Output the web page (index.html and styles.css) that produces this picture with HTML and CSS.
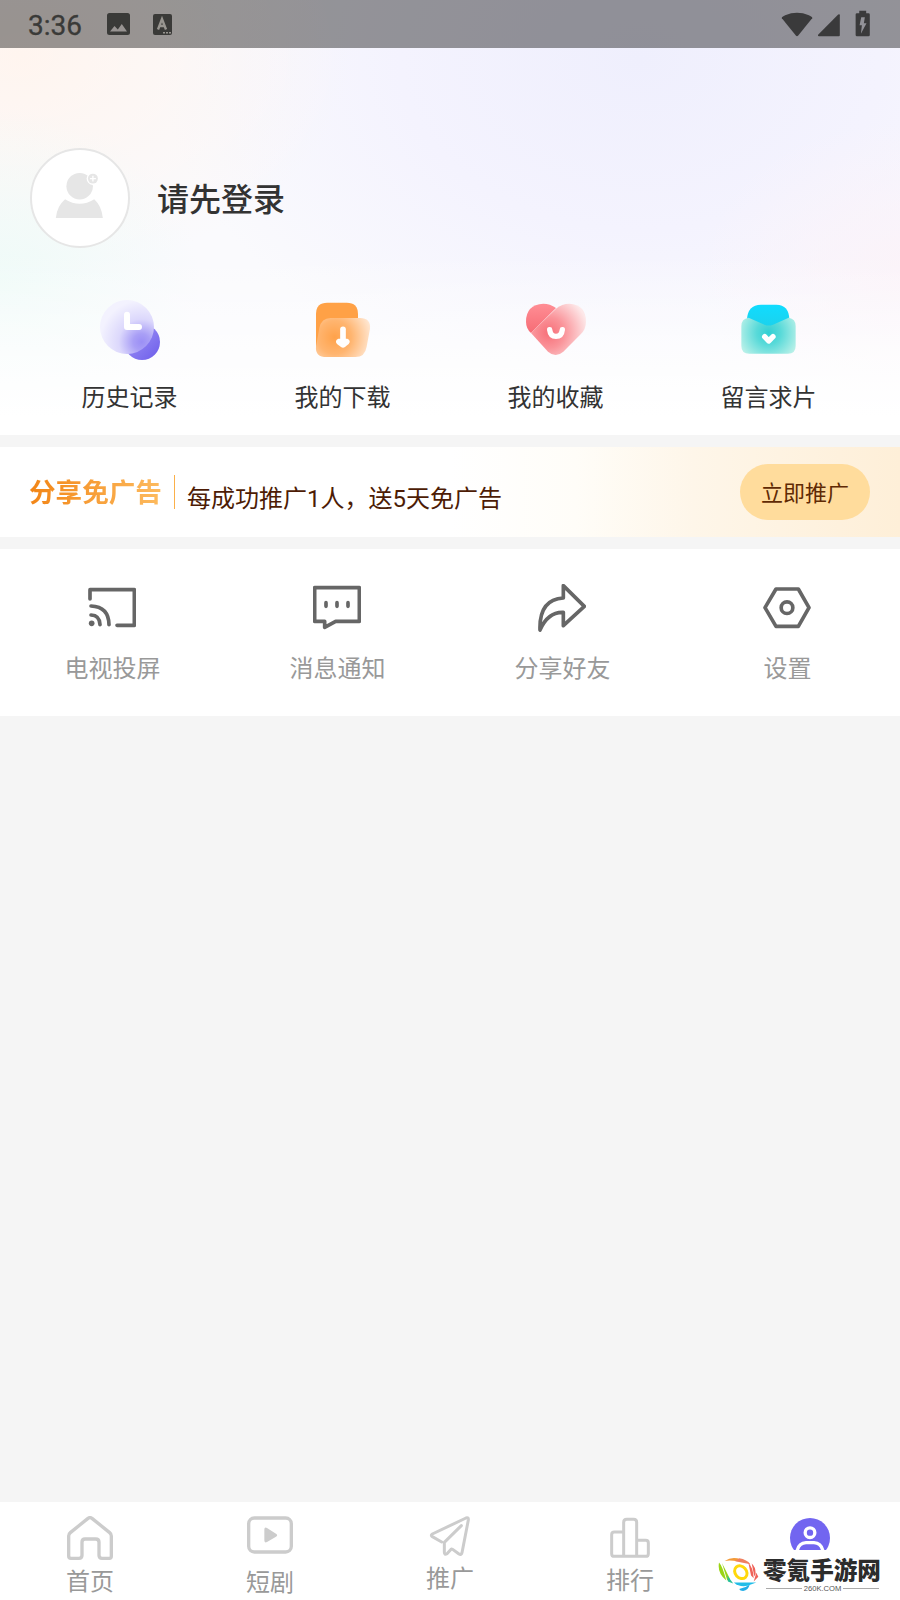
FILE: index.html
```html
<!DOCTYPE html>
<html lang="zh-CN">
<head>
<meta charset="utf-8">
<title>我的</title>
<link rel="stylesheet" href="styles.css">
</head>
<body>
<div class="screen">
  <header class="profile">
    <div class="statusbar">
      <span class="time">3:36</span>
      <svg class="st-image" viewBox="0 0 23 22"><path fill="#3a3a38" fill-rule="evenodd" d="M2.500 0h18Q23 0 23 2.500v17q0 2.500-2.500 2.500h-18Q0 22 0 19.500v-17Q0 0 2.500 0zM3 18.500h17L14.800 11l-4 5.500L7.500 13z"/></svg>
      <svg class="st-lang" viewBox="0 0 19 21"><rect width="19" height="21" rx="2" fill="#3a3a38"/><path d="M5 15.500 9 5l4 10.500M6.300 12h5.400" fill="none" stroke="#989590" stroke-width="2.400"/><path d="M10 18.700h8" stroke="#989590" stroke-width="1.600" stroke-dasharray="2 1"/></svg>
      <span class="spacer"></span>
      <svg class="st-system" viewBox="243 28 270 82" fill="#3a3a3b"><path d="M244 50q4-3 10-6 36-15 72 0 6 3 10 6v3l-43 53q-3 3-6 0l-43-53z"/><path d="M420 44v61q0 3-3 3h-60q-5 0-3-5l61-61q5-3 5 2z"/><path fill-rule="evenodd" d="M479 30h21v8h7q4 0 4 4v62q0 4-4 4h-35q-4 0-4-4V42q0-4 4-4h7zM485 50l-5 24h7l-3 26 17-32h-8l3-18z"/></svg>
    </div>
    <div class="user">
      <div class="avatar">
        <svg viewBox="165 515 150 142" width="50" height="47"><circle cx="239" cy="558" r="40" fill="#e6e6e6"/><circle cx="279" cy="535" r="19" fill="#fff"/><circle cx="279" cy="535" r="15" fill="#e6e6e6"/><path d="M279 526v18M270 535h18" stroke="#fff" stroke-width="4"/><path d="M167 654q3-36 28-57 44 28 88 0 23 21 26 57z" fill="#e6e6e6"/></svg>
      </div>
      <span class="login">请先登录</span>
    </div>
    <nav class="quick">
      <a class="quick-item">
        <svg viewBox="120 60 180 180" width="60" height="60">
          <defs>
            <linearGradient id="purple" x1="0" y1="0" x2="1" y2="1"><stop offset="0" stop-color="#a99ff8"/><stop offset="1" stop-color="#6c5cea"/></linearGradient>
            <radialGradient id="mist" gradientUnits="userSpaceOnUse" cx="245" cy="186" r="125"><stop offset="0" stop-color="#9b8ff5"/><stop offset=".2" stop-color="#a99ff6"/><stop offset=".55" stop-color="#dcd8fc"/><stop offset="1" stop-color="#f3f2fe"/></radialGradient>
          </defs>
          <circle cx="246" cy="186" r="54" fill="url(#purple)"/><circle cx="201" cy="141" r="81" fill="url(#mist)"/>
          <path d="M201 104v37h36" fill="none" stroke="#fff" stroke-width="18" stroke-linecap="round" stroke-linejoin="round"/>
        </svg>
        <span>历史记录</span>
      </a>
      <a class="quick-item">
        <svg viewBox="759 60 180 180" width="60" height="60">
          <defs><radialGradient id="amber" gradientUnits="userSpaceOnUse" cx="824" cy="172" r="112"><stop offset="0" stop-color="#ffa24a"/><stop offset=".45" stop-color="#ffb570"/><stop offset="1" stop-color="#ffe7d2"/></radialGradient></defs>
          <path d="M802 68h58q34 0 34 34v60l-80 69q-46 0-46-40v-89q0-34 34-34z" fill="#ffa146"/>
          <path d="M812 114h88q33 0 30 32l-10 54q-5 31-34 31h-86q-35 0-32-31l10-56q6-30 34-30z" fill="url(#amber)"/>
          <path d="M849 148v38" stroke="#fff" stroke-width="17" stroke-linecap="round"/><path d="M835 176h27q12 6 4 16l-11 9q-6 4-12 0l-12-9q-8-10 4-16z" fill="#fff"/>
        </svg>
        <span>我的下载</span>
      </a>
      <a class="quick-item">
        <svg viewBox="108 60 180 180" width="60" height="60">
          <defs>
            <linearGradient id="rose" x1="0" y1="0" x2="0" y2="1"><stop offset="0" stop-color="#ff8e95"/><stop offset="1" stop-color="#f66c75"/></linearGradient>
            <radialGradient id="blush" gradientUnits="userSpaceOnUse" cx="176" cy="158" r="118"><stop offset="0" stop-color="#f76f78"/><stop offset=".4" stop-color="#fa949a"/><stop offset="1" stop-color="#fde8e9"/></radialGradient>
          </defs>
          <path d="M198 84Q180 71 160 71q-52 3-52 54 0 20 15 34z" fill="url(#rose)"/>
          <path d="M123 159 198 86q18-15 40-15 50 3 50 54 0 22-16 38l-52 52q-23 20-46 0z" fill="url(#blush)"/>
          <path d="M179 149q2 20 19 20t19-20" fill="none" stroke="#fff" stroke-width="16" stroke-linecap="round"/>
        </svg>
        <span>我的收藏</span>
      </a>
      <a class="quick-item">
        <svg viewBox="747 60 180 180" width="60" height="60">
          <defs>
            <linearGradient id="cyan" x1="0" y1="0" x2="0" y2="1"><stop offset="0" stop-color="#10dcff"/><stop offset="1" stop-color="#1dd0ea"/></linearGradient>
            <radialGradient id="mint" gradientUnits="userSpaceOnUse" cx="836" cy="158" r="92"><stop offset="0" stop-color="#31d0d4"/><stop offset=".4" stop-color="#59dad9"/><stop offset="1" stop-color="#b7f0e8"/></radialGradient>
          </defs>
          <path d="M771 118q2-43 42-44h46q38 1 39 44l-62 30z" fill="url(#cyan)"/>
          <path d="M776 113l47 21q13 5 26 0l47-21q21 3 21 25v60q0 23-23 23H778q-24 0-24-23v-60q0-22 22-25z" fill="url(#mint)"/>
          <path d="M824 170l12 13 13-13" fill="none" stroke="#fff" stroke-width="16" stroke-linecap="round" stroke-linejoin="round"/>
        </svg>
        <span>留言求片</span>
      </a>
    </nav>
  </header>

  <section class="promo">
    <strong class="promo-title">分享免广告</strong>
    <i class="promo-line"></i>
    <span class="promo-text">每成功推广1人，送5天免广告</span>
    <a class="promo-btn">立即推广</a>
  </section>

  <section class="tools">
    <a class="tool">
      <svg viewBox="114 72 144 144"><path d="M120 117V89h133v107h-52M123 138q53 2 54 56M123 165q26 1 27 29"/><circle cx="125" cy="190" r="8.500" fill="#666" stroke="none"/></svg>
      <span>电视投屏</span>
    </a>
    <a class="tool">
      <svg viewBox="792 72 144 144"><path d="M797 83h134v101h-71l-33 18v-18h-30z"/><path d="M831 128v11M864 128v11M897 128v11"/></svg>
      <span>消息通知</span>
    </a>
    <a class="tool">
      <svg viewBox="144 72 144 144"><path d="M220 77l63 62-63 58v-40q-46-2-70 53-3-92 70-96z"/></svg>
      <span>分享好友</span>
    </a>
    <a class="tool">
      <svg viewBox="819 72 144 144"><path d="M858 87h67l32 56-32 56h-67l-33-56z"/><circle cx="891" cy="143" r="17.500"/></svg>
      <span>设置</span>
    </a>
  </section>

  <nav class="tabs">
    <a class="tab tab-home">
      <svg viewBox="78 78 144 138"><path d="M91 128 144 85q6-4 12 0l53 43q5 4 5 10v61q0 6-6 6h-22q-9 0-9-9v-39q0-10-10-10h-32q-9 0-9 10v39q0 9-9 9H93q-7 0-7-7v-60q0-6 5-10z"/></svg>
      <span>首页</span>
    </a>
    <a class="tab tab-video">
      <svg viewBox="618 78 144 138"><rect x="626" y="84" width="128" height="102" rx="17"/><path d="M673 119q0-9 8-5l27 17q7 4 0 9l-27 16q-8 4-8-5z" fill="#ccc" stroke="none"/></svg>
      <span>短剧</span>
    </a>
    <a class="tab tab-share">
      <svg viewBox="1158 78 144 138"><path d="M1205 156l-28-16q-6-4 0-8l101-48q8-3 7 6l-19 98q-2 8-9 4l-19-14-4-1-13 14q-8 5-8-4v-30l51-50" stroke-width="9"/></svg>
      <span>推广</span>
    </a>
    <a class="tab tab-rank">
      <svg viewBox="138 78 144 138"><path d="M191 126h-28q-8 0-8 8v57q0 8 8 8h94q8 0 8-8v-32q0-8-8-8h-27M191 199V97q0-9 9-9h21q9 0 9 9v102" stroke-width="9"/></svg>
      <span>排行</span>
    </a>
    <a class="tab tab-mine">
      <svg viewBox="678 78 144 102"><circle cx="750" cy="144" r="60" fill="#7265f0" stroke="none"/><circle cx="750" cy="128" r="14.500" stroke="#fff" stroke-width="10"/><path d="M711 184q5-25 27-26h24q22 1 27 26" stroke="#fff" stroke-width="10"/></svg>
    </a>
  </nav>

  <div class="mark">
    <svg viewBox="476 202 124 106" width="41" height="35">
      <path d="M479 219q10 10 22 54-28-22-22-54zM488 220l24 48-8 5z" fill="#9bd414"/>
      <path d="M496 214q23-15 48-5l-9 6q-23-5-39-1z" fill="#f39a38"/><path d="M540 206q24 4 34 18l-46-9z" fill="#f08060"/>
      <path d="M568 220q14 12 16 46l-8-8zM578 222q12 10 12 31l-4 8zM592 250l6 12-14 14z" fill="#ef6258"/>
      <path d="M504 258l18 24-16-6z" fill="#26bf9a"/><path d="M524 279h68l-27 10q-24 5-41-10z" fill="#22bde8"/><path d="M540 299q18-3 32-14-4 17-20 20-10 0-12-6z" fill="#22aee8"/>
      <ellipse cx="545" cy="248" rx="17" ry="21" transform="rotate(-42 545 248)" fill="none" stroke="#ffd80c" stroke-width="9"/>
    </svg>
    <div class="mark-text"><b>零氪手游网</b><small>260K.COM</small></div>
  </div>
</div>
</body>
</html>
```
FILE: styles.css
```css
* { box-sizing: border-box; }
body {
  margin: 0;
  background: #f5f5f5;
  font-family: Roboto, "Noto Sans CJK SC", sans-serif;
  font-size: 24px;
  color: #333;
}
svg { display: block; flex: none; }
.screen {
  position: relative;
  display: flex;
  flex-direction: column;
  width: 900px;
  height: 1600px;
}
.profile {
  height: 435px;
  background:
    linear-gradient(to bottom, rgba(255,255,255,0) 58%, #fff 96%),
    radial-gradient(ellipse 200px 170px at 0 280px, #effbf8, rgba(244,252,250,0)),
    radial-gradient(ellipse 330px 220px at 20px 55px, #fff5ef, rgba(254,249,246,0)),
    radial-gradient(ellipse 200px 150px at 900px 270px, #fbf3f9, rgba(251,245,250,0)),
    radial-gradient(ellipse 480px 340px at 640px 60px, #efeffd, #f4f3fe 50%, rgba(249,249,253,0)),
    #fafafd;
}
.statusbar {
  display: flex;
  align-items: center;
  height: 48px;
  padding: 0 29px 0 28px;
  background: rgba(0,0,0,.4);
}
.time { width: 79px; padding-top: 3px; font-size: 28px; font-weight: 400; line-height: 45px; -webkit-text-stroke: .3px #3a3a38; color: #3a3a38; }
.st-image { width: 23px; height: 22px; }
.st-lang { width: 19px; height: 21px; margin-left: 23px; }
.spacer { flex: 1; }
.st-system { width: 90px; height: 27px; margin-top: -2px; }
.user { display: flex; align-items: center; gap: 27px; height: 100px; margin: 100px 0 0 30px; }
.avatar {
  display: flex;
  justify-content: center;
  width: 100px;
  height: 100px;
  padding-top: 22px;
  border: 2px solid #e6e6e6;
  border-radius: 50%;
  background: #fff;
}
.login { padding-top: 3px; font-size: 32px; font-weight: 500; line-height: 48px; }
.quick { display: flex; padding: 52px 25px 0 23px; }
.quick-item { flex: 1; display: flex; flex-direction: column; align-items: center; gap: 20px; line-height: 36px; }
.promo {
  display: flex;
  align-items: center;
  height: 90px;
  margin-top: 12px;
  padding: 0 30px 0 29px;
  background: linear-gradient(to right, #fff 50%, #fffdf8 64%, #fef6e9 77%, #feefd8);
}
.promo-title {
  width: 133px;
  padding-top: 2px;
  font-size: 26.600px;
  font-weight: 700;
  line-height: 38px;
  white-space: nowrap;
  background: linear-gradient(to right, #f28516, #fdbb5f);
  -webkit-background-clip: text;
  background-clip: text;
  color: transparent;
}
.promo-line { width: 1px; height: 34px; margin: 0 12px; background: #fbb04a; }
.promo-text { padding-top: 14px; line-height: 36px; color: #4d1c05; }
.promo-btn {
  width: 130px;
  height: 56px;
  margin-left: auto;
  border-radius: 28px;
  background: #ffdc9c;
  font-size: 22px;
  line-height: 59px;
  text-align: center;
  color: #602a04;
}
.tools { display: flex; height: 167px; margin-top: 12px; padding-top: 35px; background: #fff; }
.tool { flex: 1; display: flex; flex-direction: column; align-items: center; gap: 19px; line-height: 36px; color: #999; }
.tool svg { width: 48px; height: 48px; margin-right: 1px; fill: none; stroke: #666; stroke-width: 11; stroke-linecap: round; stroke-linejoin: round; }
.tabs { display: flex; height: 98px; margin-top: auto; padding-top: 14px; background: #fff; }
.tab { flex: 1; display: flex; flex-direction: column; align-items: center; gap: 1px; line-height: 36px; color: #999; }
.tab svg { width: 48px; height: 46px; fill: none; stroke: #ccc; stroke-width: 10; stroke-linecap: round; stroke-linejoin: round; }
.tab-home span { margin-top: 1px; }
.tab-video span { margin-top: 2px; }
.tab-share span { margin-top: -2px; }
.tab-mine svg { height: 34px; stroke-linecap: butt; }
/* site badge floating over the tab bar */
.mark { position: absolute; right: 0; bottom: 0; display: flex; gap: 4px; width: 182px; height: 50px; padding-top: 7px; background: #fff; }
.mark-text { display: flex; flex-direction: column; width: 118px; }
.mark-text b { padding-top: 1px; font-size: 23.600px; font-weight: 900; line-height: 26px; white-space: nowrap; color: #2c2c2c; }
.mark-text small { display: flex; align-items: center; gap: 2px; margin: -1px 2px 0 3px; font: 7.600px/11px "Liberation Sans", sans-serif; color: #555; }
.mark-text small::before, .mark-text small::after { content: ""; flex: 1; height: 1px; background: #aaa; }
```
